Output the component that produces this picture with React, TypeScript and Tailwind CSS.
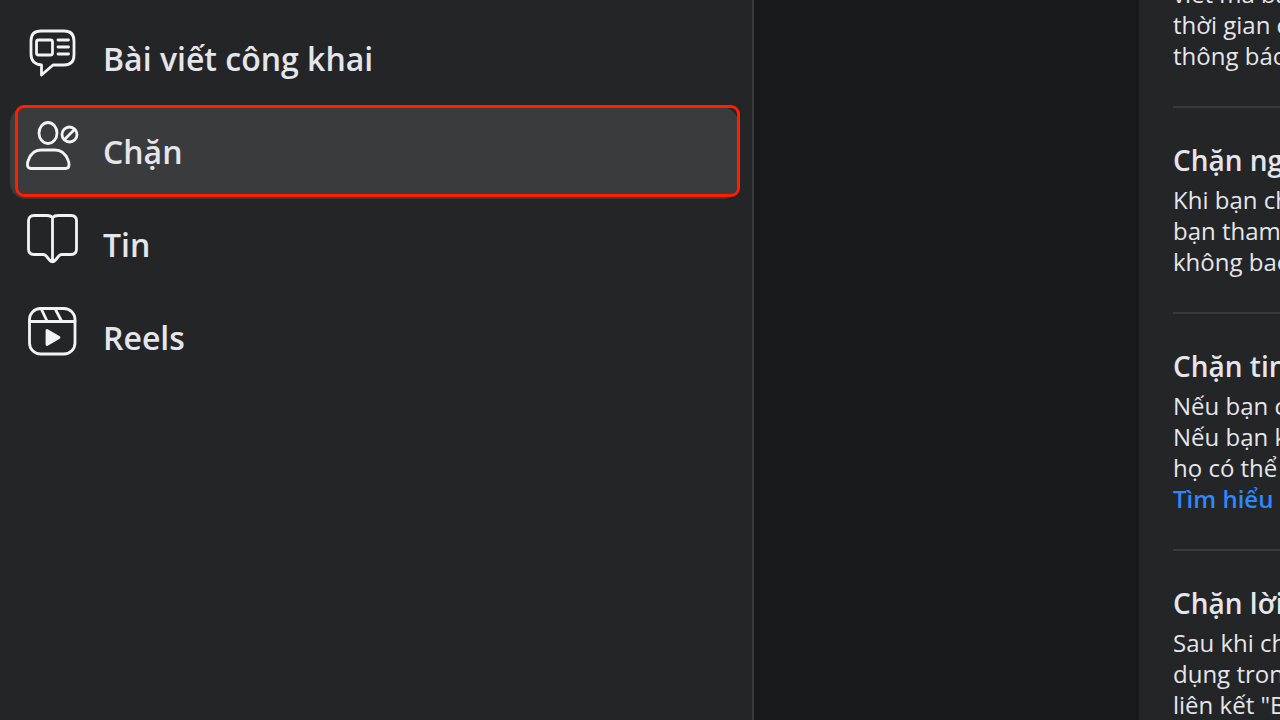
import type { ReactNode } from 'react';

type NavItem = {
  label: string;
  icon: ReactNode;
  active?: boolean;
};

const navItems: NavItem[] = [
  { label: 'Bài viết công khai', icon: <PostIcon /> },
  { label: 'Chặn', icon: <BlockIcon />, active: true },
  { label: 'Tin', icon: <StoryIcon /> },
  { label: 'Reels', icon: <ReelsIcon /> }
];

const sections = [
  {
    title: 'Chặn người dùng',
    lines: ['Khi bạn chặn ai đó', 'bạn tham gia', 'không bao gồm']
  },
  {
    title: 'Chặn tin nhắn',
    lines: ['Nếu bạn chặn', 'Nếu bạn không', 'họ có thể vẫn'],
    link: 'Tìm hiểu thêm'
  },
  {
    title: 'Chặn lời mời',
    lines: ['Sau khi chặn', 'dụng trong', 'liên kết "Bỏ qua"']
  }
];

export default function App() {
  return (
    <div className="flex h-screen overflow-hidden bg-[#18191a] font-['Open_Sans','Noto_Sans',sans-serif] text-[#e4e6eb]">
      <aside className="w-[754px] shrink-0 border-r-2 border-[#393a3b] bg-[#242526] pl-[10px] pr-[14px] pt-[14px]">
        <nav className="flex flex-col gap-px">
          {navItems.map((item) => (
            <NavLink key={item.label} {...item} />
          ))}
        </nav>
      </aside>

      <main className="min-w-0 flex-1 pl-[385px]">
        <div className="min-h-full overflow-hidden bg-[#242526] pl-[34px]">
          <div className="-mt-[22px] whitespace-nowrap pb-[35px] text-2xl leading-[31px]">
            <p>viết mà bạn</p>
            <p>thời gian của</p>
            <p>thông báo</p>
          </div>
          {sections.map((section) => (
            <section key={section.title} className="whitespace-nowrap border-t-2 border-[#393a3b] pb-[35px] pt-8">
              <h2 className="pb-1 text-[28px] font-semibold leading-[40px]">{section.title}</h2>
              <div className="text-2xl leading-[31px]">
                {section.lines.map((line) => (
                  <p key={line}>{line}</p>
                ))}
                {section.link ? (
                  <a href="#" className="block font-semibold text-[#2d88ff]">
                    {section.link}
                  </a>
                ) : null}
              </div>
            </section>
          ))}
        </div>
      </main>
    </div>
  );
}

function NavLink({ label, icon, active }: NavItem) {
  return (
    <a
      href="#"
      aria-current={active ? 'page' : undefined}
      className={`relative flex h-[92px] items-center gap-[23px] rounded-2xl pl-4 ${active ? 'bg-[#3a3b3c]' : ''}`}
    >
      <span className="mb-[14px] text-[#f2f3f5]">{icon}</span>
      <span className="pb-[2px] text-[32px] font-semibold leading-[44px]">{label}</span>
      {active ? (
        <span className="absolute -right-[2px] -top-[2px] bottom-[2px] left-[5px] rounded-[9px] border-[3px] border-[#ff1e00]" />
      ) : null}
    </a>
  );
}

function Icon({ children }: { children: ReactNode }) {
  return (
    <svg
      width="54"
      height="54"
      viewBox="0 0 54 54"
      fill="none"
      stroke="currentColor"
      strokeWidth="2.8"
      strokeLinecap="round"
      strokeLinejoin="round"
      aria-hidden="true"
    >
      {children}
    </svg>
  );
}

function PostIcon() {
  return (
    <Icon>
      <path d="M15 5H38Q48 5 48 15V29Q48 39 38 39H27L15.5 49V39Q5 38 5 28V15Q5 5 15 5Z" />
      <rect x="10.5" y="14" width="16" height="15" rx="2" />
      <path d="M32 14H42.5M32 21H42.5M32 28H42.5" />
    </Icon>
  );
}

function BlockIcon() {
  return (
    <Icon>
      <ellipse cx="22" cy="14" rx="9" ry="10.500" />
      <path d="M15 31H29Q38 31 42 41Q43 43.5 43 45V46Q43 49.5 39.5 49.5H5Q1.500 49.5 1.500 46V45Q1.500 43 2.500 41Q6 31 15 31Z" />
      <circle cx="43.5" cy="15.500" r="7.500" />
      <path d="M38.500 20.500L48.500 10.500" />
    </Icon>
  );
}

function StoryIcon() {
  return (
    <Icon>
      <path d="M26.500 5.500Q24.500 3.500 21 3.500H8Q2.500 3.500 2.500 9V37Q2.500 42.500 8 42.500H17.500Q19.500 42.500 21 45L23.500 48Q26.500 51.500 29.500 48L32 45Q33.500 42.500 35.500 42.500H45Q50.500 42.500 50.500 37V9Q50.500 3.500 45 3.500H32Q28.500 3.500 26.500 5.500ZM26.500 5.500V49" />
    </Icon>
  );
}

function ReelsIcon() {
  return (
    <Icon>
      <rect x="3.500" y="3.500" width="45.500" height="45.500" rx="11" />
      <path d="M3.500 16.500H49M15.500 4.500L21 16M29.500 4.500L35.500 16" />
      <path d="M21 25.500V39.500L33 32.500Z" fill="currentColor" />
    </Icon>
  );
}
